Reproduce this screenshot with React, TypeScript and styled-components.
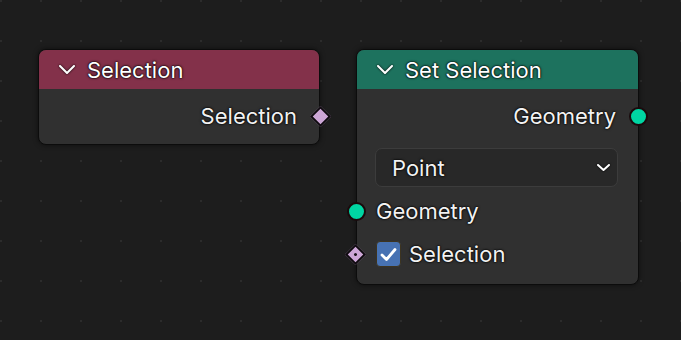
import React from "react";
import styled, { createGlobalStyle } from "styled-components";

const GlobalStyle = createGlobalStyle`
  html, body {
    margin: 0;
    padding: 0;
    background: #1d1d1d;
  }
  body {
    font-family: Inter, "Noto Sans", sans-serif;
  }
`;

const Canvas = styled.div`
  width: 681px;
  height: 340px;
  box-sizing: border-box;
  padding: 49px 0 0 38px;
  display: flex;
  align-items: flex-start;
  gap: 36px;
  background-color: #1d1d1d;
  background-image: radial-gradient(circle, #2c2c2c 1.1px, transparent 1.4px);
  background-size: 40px 40px;
  background-position: 21px -19px;
  overflow: hidden;
`;

const Node = styled.div<{ $width: number }>`
  width: ${(p) => p.$width}px;
  background: #303030;
  border: 1px solid #0c0c0c;
  border-radius: 8px;
  box-shadow: 0 0 5px rgba(0, 0, 0, 0.55);
  display: flex;
  flex-direction: column;
`;

const Header = styled.div<{ $color: string }>`
  height: 39px;
  background: ${(p) => p.$color};
  border-radius: 7px 7px 0 0;
  display: flex;
  align-items: center;
  padding-left: 19px;
  gap: 11px;
  color: #fff;
  font-size: 22px;
  text-shadow: 0 0 1px #000, 0 0 2px #000, 0 0 3px rgba(0, 0, 0, 0.6);
`;

const Body = styled.div<{ $pad: string }>`
  display: flex;
  flex-direction: column;
  padding: ${(p) => p.$pad};
`;

const Row = styled.div<{ $align: "left" | "right"; $mt?: number }>`
  position: relative;
  height: 30px;
  margin-top: ${(p) => p.$mt ?? 0}px;
  display: flex;
  align-items: center;
  justify-content: ${(p) => (p.$align === "right" ? "flex-end" : "flex-start")};
  padding: ${(p) => (p.$align === "right" ? "0 22px 0 0" : "0 0 0 19px")};
  gap: 8px;
`;

const Label = styled.span`
  color: #f2f2f2;
  font-size: 22px;
  text-shadow: 0 0 1px #000, 0 0 2px #000, 0 0 3px rgba(0, 0, 0, 0.6);
  white-space: nowrap;
`;

const CircleSocket = styled.span<{ $side: "left" | "right" }>`
  position: absolute;
  top: 50%;
  ${(p) => p.$side}: -10px;
  width: 15px;
  height: 15px;
  margin-top: -9.5px;
  border-radius: 50%;
  background: #00d6a3;
  border: 2px solid #1a0a0c;
`;

const DiamondSocket = styled.span<{ $side: "left" | "right" }>`
  position: absolute;
  top: 50%;
  ${(p) => p.$side}: -9px;
  width: 11px;
  height: 11px;
  margin-top: -7.5px;
  transform: rotate(45deg);
  background: #cca6d6;
  border: 2px solid #0e0a0e;
  display: flex;
  align-items: center;
  justify-content: center;
`;

const FieldDot = styled.span`
  width: 3px;
  height: 3px;
  border-radius: 50%;
  background: #1a141a;
`;

const Dropdown = styled.div`
  margin: 17px 20px 0 18px;
  height: 39px;
  box-sizing: border-box;
  background: #282828;
  border: 1px solid #3c3c3c;
  border-radius: 7px;
  display: flex;
  align-items: center;
  justify-content: space-between;
  padding: 0 6px 0 16px;
`;

const CheckBox = styled.span`
  width: 25px;
  height: 26px;
  box-sizing: border-box;
  border-radius: 4px;
  background: #4772b3;
  border: 1px solid #3d3420;
  display: flex;
  align-items: center;
  justify-content: center;
`;

const Chevron = ({ w, h, stroke }: { w: number; h: number; stroke: number }) => (
  <svg width={w + 4} height={h + 4} viewBox={`-2 -2 ${w + 4} ${h + 4}`} style={{ filter: "drop-shadow(0 0 1px #000)" }}>
    <polyline points={`0,0 ${w / 2},${h} ${w},0`} fill="none" stroke="#fff" strokeWidth={stroke} strokeLinecap="round" strokeLinejoin="round" />
  </svg>
);

const Check = () => (
  <svg width="17" height="15" viewBox="0 0 17 15">
    <polyline points="2,8 6.5,12.5 15,2.5" fill="none" stroke="#fff" strokeWidth="2.8" strokeLinecap="round" strokeLinejoin="round" />
  </svg>
);

const App = () => {
  return (
    <>
      <GlobalStyle />
      <Canvas>
        <Node $width={280}>
          <Header $color="#83314a">
            <Chevron w={14} h={7} stroke={2} />
            <span>Selection</span>
          </Header>
          <Body $pad="12px 0 13px 0">
            <Row $align="right">
              <Label>Selection</Label>
              <DiamondSocket $side="right" />
            </Row>
          </Body>
        </Node>

        <Node $width={281}>
          <Header $color="#1d725e">
            <Chevron w={14} h={7} stroke={2} />
            <span>Set Selection</span>
          </Header>
          <Body $pad="12px 0 15px 0">
            <Row $align="right">
              <Label>Geometry</Label>
              <CircleSocket $side="right" />
            </Row>
            <Dropdown>
              <Label>Point</Label>
              <Chevron w={11} h={5} stroke={2} />
            </Dropdown>
            <Row $align="left" $mt={9}>
              <CircleSocket $side="left" />
              <Label>Geometry</Label>
            </Row>
            <Row $align="left" $mt={13}>
              <DiamondSocket $side="left">
                <FieldDot />
              </DiamondSocket>
              <CheckBox>
                <Check />
              </CheckBox>
              <Label>Selection</Label>
            </Row>
          </Body>
        </Node>
      </Canvas>
    </>
  );
};

export default App;
